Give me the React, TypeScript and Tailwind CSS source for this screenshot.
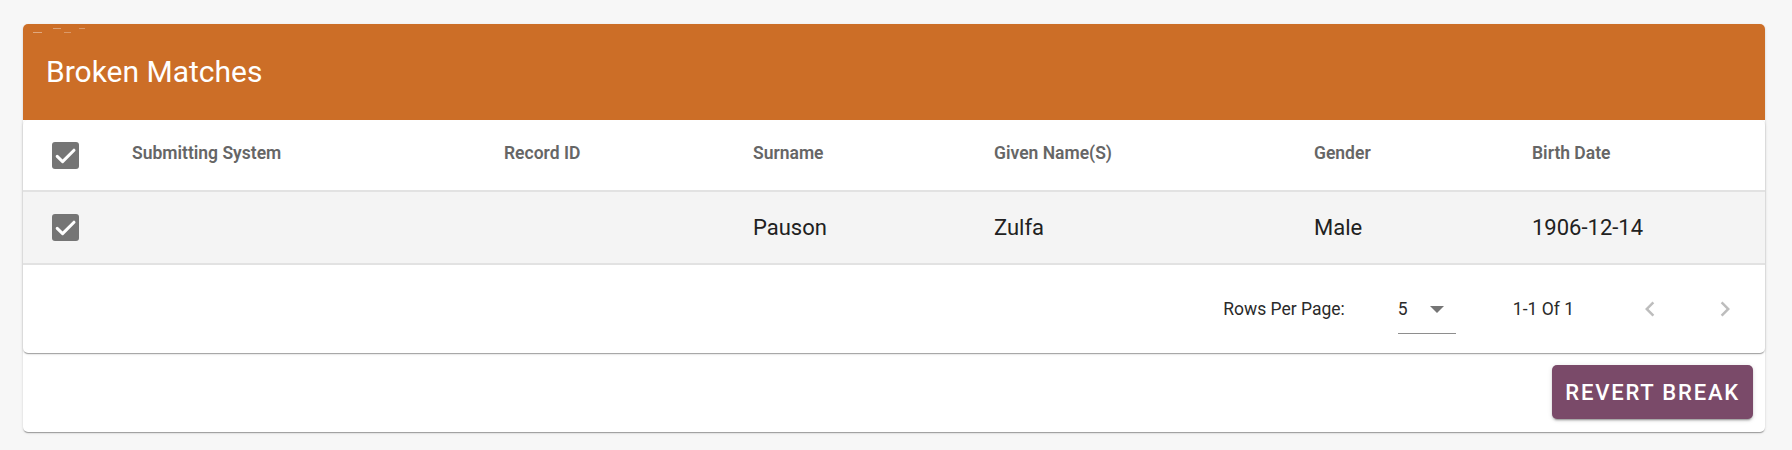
import React from 'react';

const columns = [
  { key: 'system', label: 'Submitting System' },
  { key: 'recordId', label: 'Record ID' },
  { key: 'surname', label: 'Surname' },
  { key: 'given', label: 'Given Name(S)' },
  { key: 'gender', label: 'Gender' },
  { key: 'birth', label: 'Birth Date' },
];

const rows = [
  { system: '', recordId: '', surname: 'Pauson', given: 'Zulfa', gender: 'Male', birth: '1906-12-14' },
];

const gridCols = 'grid grid-cols-[109px_372px_249px_241px_320px_218px_1fr]';

function CheckedBox() {
  return (
    <div className="pl-[29px]">
      <svg width="27" height="27" viewBox="0 0 27 27" className="block">
        <rect x="0" y="0" width="27" height="27" rx="3" fill="#757575" />
        <path d="M5.2 14.4l5.4 5.2L22 8.2" fill="none" stroke="#fff" strokeWidth="3" strokeLinecap="round" strokeLinejoin="round" />
      </svg>
    </div>
  );
}

function Chevron({ dir }: { dir: 'left' | 'right' }) {
  return (
    <button className="w-[60px] h-[60px] flex items-center justify-center text-[#bdbdbd]">
      <svg width="30" height="30" viewBox="0 0 24 24" fill="currentColor">
        {dir === 'left' ? (
          <path d="M15.41 7.41L14 6l-6 6 6 6 1.41-1.41L10.83 12z" />
        ) : (
          <path d="M10 6L8.59 7.41 13.17 12l-4.58 4.59L10 18l6-6z" />
        )}
      </svg>
    </button>
  );
}

export default function App() {
  return (
    <div className="min-h-[450px] bg-[#f7f7f7] pt-[24px] pl-[23px] font-[Roboto,sans-serif]">
      <div className="w-[1742px] bg-white rounded-[5px] shadow-[0_2px_1px_-1px_rgba(0,0,0,0.2),0_1px_1px_0_rgba(0,0,0,0.14),0_1px_3px_0_rgba(0,0,0,0.12)]">
        {/* Header */}
        <div className="relative h-[96px] bg-[#cc6e27] rounded-t-[5px] flex items-center pl-[23px]">
          <div className="absolute left-[10px] top-[4px] flex flex-col gap-[3px] opacity-50">
            <div className="flex gap-[8px]">
              <span className="w-[8px] h-[1px] bg-white/70 ml-[20px]" />
              <span className="w-[6px] h-[1px] bg-white/60 ml-[10px]" />
            </div>
            <div className="flex gap-[10px]">
              <span className="w-[9px] h-[1px] bg-white/80" />
              <span className="w-[7px] h-[1px] bg-white/60 ml-[12px]" />
            </div>
          </div>
          <h2 className="text-[30px] font-normal text-white leading-none">Broken Matches</h2>
        </div>

        {/* Table */}
        <div className="bg-white rounded-[5px] shadow-[0_2px_1px_-1px_rgba(0,0,0,0.2),0_1px_1px_0_rgba(0,0,0,0.14),0_1px_3px_0_rgba(0,0,0,0.12)]">
          <div className={`${gridCols} h-[72px] items-center border-b-2 border-[#e2e2e2]`}>
            <CheckedBox />
            {columns.map((c) => (
              <div key={c.key} className="text-[17.5px] font-semibold text-[#666] mb-[4px] whitespace-nowrap">
                {c.label}
              </div>
            ))}
          </div>
          {rows.map((r, i) => (
            <div key={i} className={`${gridCols} h-[73px] items-center bg-[#f4f4f4] border-b-2 border-[#e2e2e2]`}>
              <CheckedBox />
              {columns.map((c) => (
                <div key={c.key} className="text-[22px] text-[#212121] whitespace-nowrap">
                  {r[c.key as keyof typeof r]}
                </div>
              ))}
            </div>
          ))}
          <div className="h-[88px] flex items-center justify-end pr-[10px] text-[17.5px] text-[#2a2a2a]">
            <span>Rows Per Page:</span>
            <div className="ml-[53px] w-[58px] pt-[15px] pb-[14px] border-b-[1.5px] border-[#8e8e8e] flex items-center">
              <span className="leading-[20px]">5</span>
              <svg width="14" height="7" viewBox="0 0 14 7" className="ml-[22px]">
                <path d="M0 0h14L7 7z" fill="#757575" />
              </svg>
            </div>
            <span className="ml-[57px]">1-1 Of 1</span>
            <div className="ml-[46px] flex gap-[15px]">
              <Chevron dir="left" />
              <Chevron dir="right" />
            </div>
          </div>
        </div>

        {/* Actions */}
        <div className="flex justify-end pt-[12px] pb-[13px] pr-[12px]">
          <button className="h-[54px] px-[13px] rounded-[5px] bg-[#7a4a69] text-white text-[22px] font-medium tracking-[1.8px] shadow-[0_3px_1px_-2px_rgba(0,0,0,0.2),0_2px_2px_0_rgba(0,0,0,0.14),0_1px_5px_0_rgba(0,0,0,0.12)]">
            REVERT BREAK
          </button>
        </div>
      </div>
    </div>
  );
}
